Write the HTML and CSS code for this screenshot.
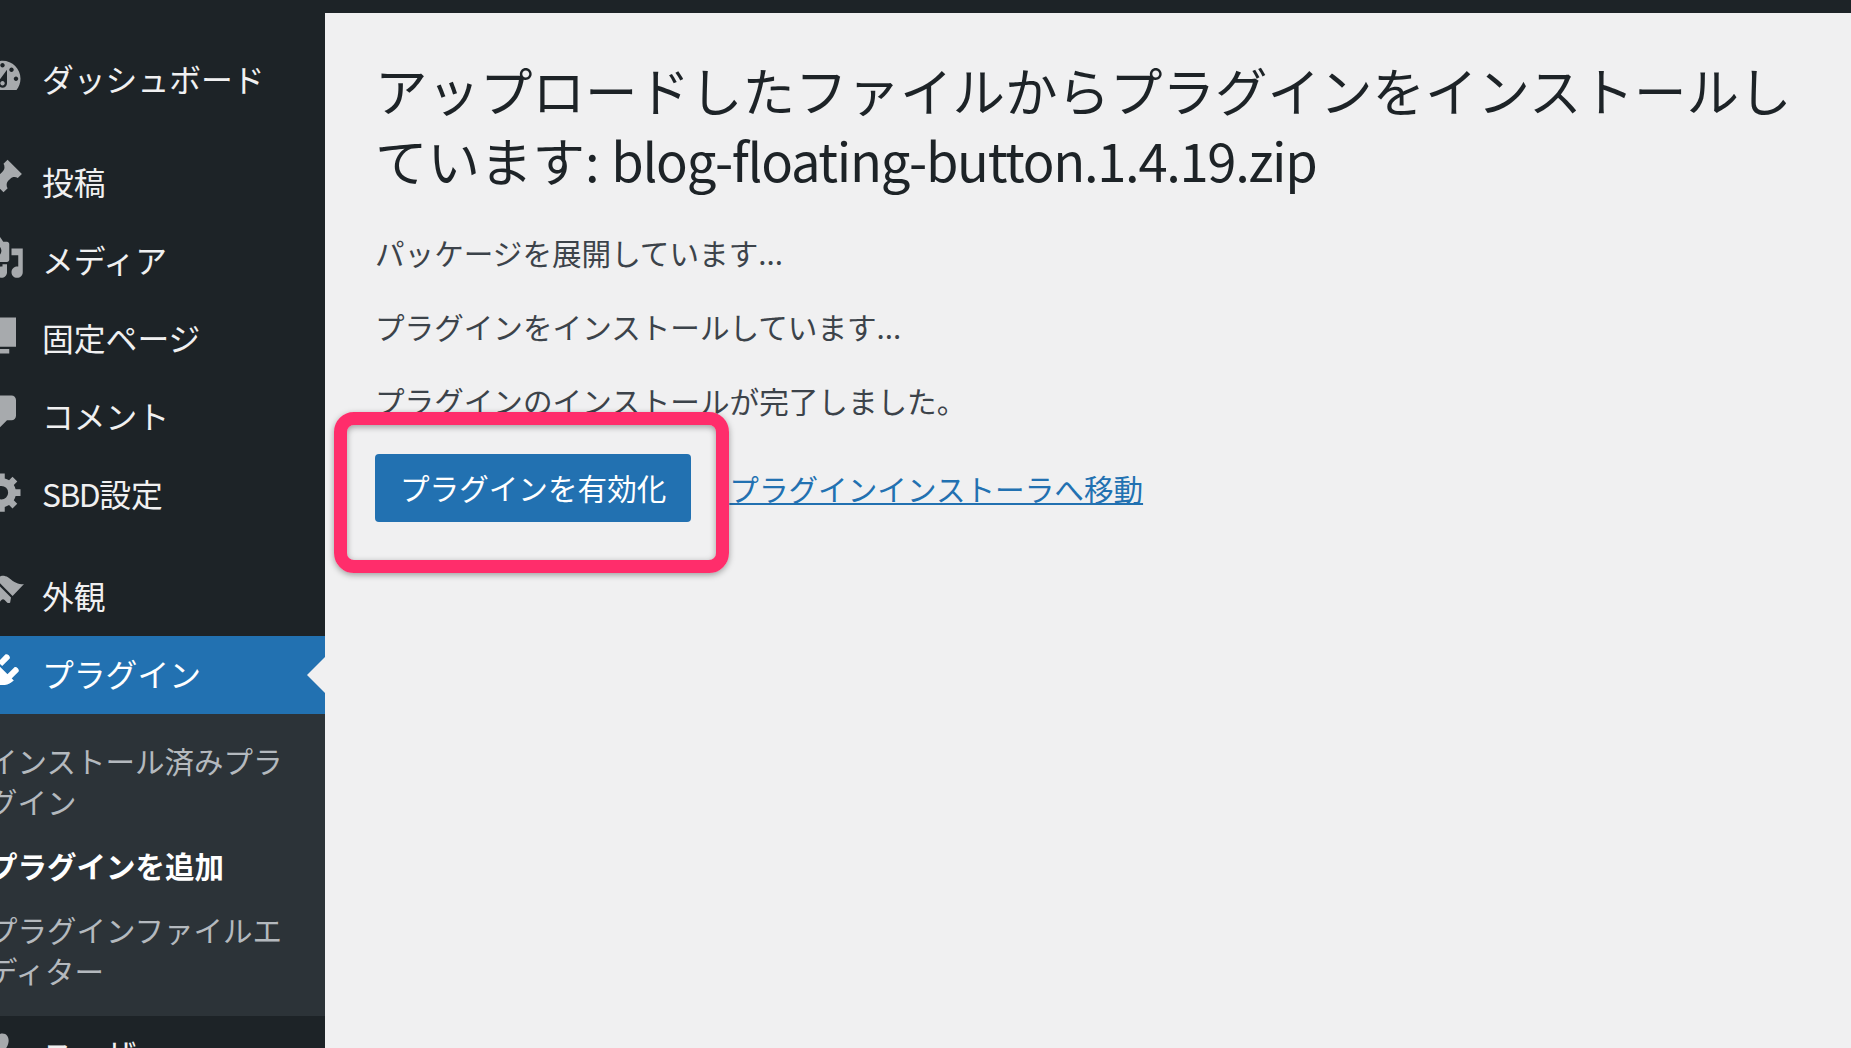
FILE: index.html
```html
<!DOCTYPE html>
<html lang="ja">
<head>
<meta charset="utf-8">
<title>プラグインのインストール</title>
<link rel="stylesheet" href="styles.css">
</head>
<body>
<div class="topbar"></div>
<div class="layout">
  <nav class="sidebar">
    <ul class="menu">
      <li class="item first"><svg class="icon" viewBox="0 0 20 20"><path d="M3.760 16h12.480c1.100-1.370 1.760-3.110 1.760-5 0-4.420-3.580-8-8-8s-8 3.580-8 8c0 1.890.66 3.630 1.760 5zM10 4c.55 0 1 .45 1 1s-.45 1-1 1-1-.45-1-1 .45-1 1-1zM6 6c.55 0 1 .45 1 1s-.45 1-1 1-1-.45-1-1 .45-1 1-1zm8 0c.55 0 1 .45 1 1s-.45 1-1 1-1-.45-1-1 .45-1 1-1zm-5.370 5.550L12 7v6c0 1.100-.9 2-2 2s-2-.9-2-2c0-.57.24-1.080.63-1.450zM4 10c.55 0 1 .45 1 1s-.45 1-1 1-1-.45-1-1 .45-1 1-1zm12 0c.55 0 1 .45 1 1s-.45 1-1 1-1-.45-1-1 .45-1 1-1zm-5 3c0-.55-.45-1-1-1s-1 .45-1 1 .45 1 1 1 1-.45 1-1z" fill-rule="evenodd"/></svg><span>ダッシュボード</span></li>
      <li class="item gap"><svg class="icon" viewBox="0 0 20 20"><path d="M10.440 3.020l1.820-1.820 6.360 6.350-1.830 1.820c-1.050-.68-2.480-.57-3.410.36l-.75.75c-.92.93-1.040 2.350-.35 3.410l-1.830 1.820-2.410-2.410-2.800 2.790c-.42.42-3.380 2.710-3.800 2.290s1.860-3.390 2.280-3.810l2.790-2.790L4.100 9.360l1.830-1.820c1.050.69 2.480.57 3.400-.36l.75-.75c.93-.92 1.050-2.350.36-3.410z"/></svg><span>投稿</span></li>
      <li class="item"><svg class="icon" viewBox="0 0 20 20"><path fill-rule="evenodd" d="M13 11V4c0-.55-.45-1-1-1h-1.670L9 1H5L3.670 3H2c-.55 0-1 .45-1 1v7c0 .55.45 1 1 1h10c.55 0 1-.45 1-1zM7 4.500c1.380 0 2.500 1.120 2.500 2.500S8.380 9.500 7 9.500 4.500 8.380 4.500 7 5.620 4.500 7 4.500zM14 6h5v10.500c0 1.380-1.120 2.500-2.500 2.500S14 17.880 14 16.500s1.120-2.500 2.500-2.500c.17 0 .34.020.5.050V9h-3V6zm-4 8.050V13h2v3.500c0 1.380-1.120 2.500-2.500 2.500S7 17.880 7 16.500 8.120 14 9.500 14c.17 0 .34.020.5.050z"/></svg><span>メディア</span></li>
      <li class="item"><svg class="icon" viewBox="0 0 20 20"><path d="M6 15V2h10v13H6zm-1 1h8v2H3V5h2v11z"/></svg><span>固定ページ</span></li>
      <li class="item"><svg class="icon" viewBox="0 0 20 20"><path d="M5 2h9c1.100 0 2 .9 2 2v7c0 1.100-.9 2-2 2h-2l-5 5v-5H5c-1.100 0-2-.9-2-2V4c0-1.100.9-2 2-2z"/></svg><span>コメント</span></li>
      <li class="item"><svg class="icon" viewBox="0 0 20 20"><path fill-rule="evenodd" d="M18 12h-2.180c-.17.7-.44 1.350-.81 1.930l1.540 1.540-2.100 2.100-1.540-1.540c-.58.36-1.230.64-1.910.81V19H8v-2.180c-.68-.17-1.330-.45-1.910-.81l-1.540 1.540-2.120-2.120 1.540-1.540c-.36-.58-.63-1.230-.8-1.890H1V9h2.180c.17-.7.44-1.350.81-1.930L2.450 5.530l2.100-2.100 1.540 1.540c.58-.37 1.230-.64 1.910-.81V2h3v2.180c.68.17 1.330.44 1.910.81l1.540-1.540 2.120 2.120-1.540 1.540c.36.58.63 1.230.8 1.890H18v3zm-8.500 1.500a3 3 0 1 0 0-6 3 3 0 0 0 0 6z"/></svg><span><em class="acronym">SBD</em>設定</span></li>
      <li class="item gap-wide"><svg class="icon" viewBox="0 0 20 20"><path d="M14.480 11.060L7.410 3.990l1.500-1.500c.5-.56 2.300-.47 3.510.32 1.210.8 1.430 1.280 2.910 2.100 1.180.64 2.450 1.260 4.230.91zm-.710.710L6.700 4.700 4.930 6.470c-.39.390-.39 1.020 0 1.410l1.060 1.060c.39.390.39 1.030 0 1.420-.6.600-1.430 1.110-2.210 1.690-.35.260-.700.530-1.010.840C1.430 13.230.540 14.800 1.560 17.330c2.530 1.020 4.100.13 5.440-1.210.31-.31.580-.66.840-1.010.58-.78 1.090-1.610 1.690-2.210.39-.39 1.030-.39 1.420 0l1.060 1.060c.39.390 1.020.39 1.410 0z"/></svg><span>外観</span></li>
      <li class="item current"><svg class="icon" viewBox="0 0 20 20"><path d="M13.110 4.360L9.870 7.600 8 5.730l3.240-3.240c.35-.34 1.050-.2 1.560.32.520.51.660 1.210.31 1.550zm-8 1.770l.91-1.120 9.010 9.010-1.190.84c-.71.710-2.580 1.160-3.820 1.160H6.140L4.310 17.850 2.500 16.040l1.830-1.830V12.310c0-1.240.45-3.110 1.160-3.820zm11.970 3.950l-3.240 3.240-1.870-1.870 3.240-3.240c.34-.35 1.040-.21 1.560.31.510.51.650 1.210.31 1.560z"/></svg><span>プラグイン</span><i class="arrow"></i></li>
      <li class="sub">
        <a class="sublink">インストール済みプラグイン</a>
        <a class="sublink strong">プラグインを追加</a>
        <a class="sublink">プラグインファイルエディター</a>
      </li>
      <li class="item"><svg class="icon" viewBox="0 0 20 20"><path d="M10 9.250c-2.270 0-2.730-3.440-2.730-3.440C7 4.020 7.820 2 9.970 2c2.160 0 2.980 2.020 2.710 3.810 0 0-.41 3.440-2.680 3.440zm0 2.570L12.720 10c2.390 0 4.520 2.330 4.520 4.530v2.490s-3.650 1.130-7.240 1.130c-3.650 0-7.240-1.130-7.240-1.130v-2.490c0-2.250 1.940-4.480 4.150-4.480z"/></svg><span>ユーザー</span></li>
    </ul>
  </nav>
  <main class="content">
    <h1 class="title">アップロードしたファイルからプラグインをインストールしています: <span class="latin">blog-floating-button.1.4.19.zip</span></h1>
    <p class="line">パッケージを展開しています...</p>
    <p class="line">プラグインをインストールしています...</p>
    <p class="line">プラグインのインストールが完了しました。</p>
    <div class="actions">
      <a class="button">プラグインを有効化</a>
      <a class="link">プラグインインストーラへ移動</a>
      <i class="highlight"></i>
    </div>
  </main>
</div>
</body>
</html>
```
FILE: styles.css
```css
* { box-sizing: border-box; }
html, body { margin: 0; height: 100%; overflow: hidden; }
body {
  background: #f0f0f1;
  color: #3c434a;
  font-family: "Noto Sans CJK JP", "Noto Sans", sans-serif;
  font-size: 29.6px;
}
.topbar { height: 13px; background: #1d2327; }
.layout { display: flex; height: 1035px; }
.sidebar { width: 325px; flex: none; background: #1d2327; overflow: hidden; }
.menu { list-style: none; margin: 0 0 0 -39px; padding: 0; width: 364px; }
.item {
  position: relative;
  display: flex;
  align-items: center;
  height: 78px;
  color: #f0f0f1;
  font-size: 31.8px;
}
.item span { margin: 0 0 5px 17px; }
.acronym { font-style: normal; letter-spacing: -1.5px; }
.item.first { margin-top: 28px; }
.item.gap { margin-top: 25px; }
.item.gap-wide { margin-top: 24px; }
.icon { width: 45px; height: 45px; margin: 0 0 8px 19px; flex: none; fill: #a7aaad; }
.item.current { background: #2271b1; color: #fff; }
.item.current .icon { fill: #fff; }
.arrow {
  position: absolute;
  right: 0;
  top: 50%;
  margin-top: -18px;
  border: 18px solid transparent;
  border-right-color: #f0f0f1;
  border-left-width: 0;
}
.sub { background: #2c3338; padding: 26px 0 25px; font-size: 29.5px; }
.sublink {
  display: block;
  color: #b4b9be;
  line-height: 41px;
  padding: 0 27px 23px 27px;
}
.sublink.strong { color: #fff; font-weight: 700; }
.sublink:last-child { padding-bottom: 0; }
.content { flex: 1; padding: 41px 40px 0 50px; min-width: 0; }
.title {
  margin: 0 0 38px;
  font-size: 52.5px;
  font-weight: 400;
  line-height: 70px;
  color: #1d2327;
}
.latin { letter-spacing: -1.3px; }
.line { margin: 0 0 33px; line-height: 41px; }
.actions { position: relative; display: flex; align-items: center; margin-top: 1px; }
.button {
  display: block;
  background: #2271b1;
  color: #fff;
  border-radius: 4px;
  padding: 0 25px;
  height: 68px;
  line-height: 68px;
  margin-right: 38px;
}
.link { color: #2271b1; text-decoration: underline; }
.highlight {
  position: absolute;
  left: -41px;
  top: -42px;
  width: 395px;
  height: 161px;
  border: 13px solid #ff2d6b;
  border-radius: 20px;
  box-shadow: 0 2px 6px rgba(0,0,0,.35), inset 0 2px 6px rgba(0,0,0,.35);
}
```
